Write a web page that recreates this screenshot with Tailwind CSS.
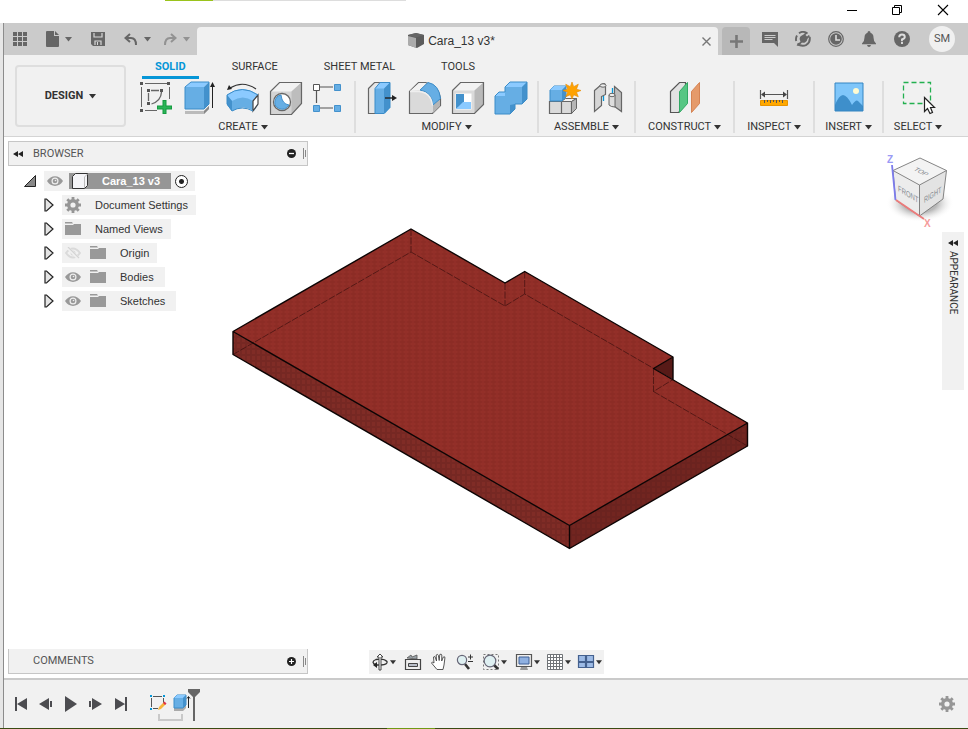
<!DOCTYPE html>
<html lang="en">
<head>
    <meta charset="UTF-8">
    <meta name="viewport" content="width=device-width, initial-scale=1.0">
    <title>Cara_13 v3*</title>
    <script src="https://cdn.jsdelivr.net/npm/@tailwindcss/browser@4"></script>
</head>
<body class="min-h-screen flex flex-col bg-white font-['Roboto',sans-serif] text-[11px] leading-4 text-[#333]">
    <!-- shared icons -->
    <svg class="hidden">
        <symbol id="caret" viewBox="0 0 7 5"><path d="M0 0h7L3.500 4.500z" fill="currentColor"/></symbol>
        <symbol id="folder" viewBox="0 0 16 14"><path d="M0 0h7l1 1.500H0zM0 3h8l1-1h7v11H0z" fill="#999"/></symbol>
        <symbol id="eye" viewBox="0 0 16 10">
            <path d="M0 5C4-1.500 12-1.500 16 5 12 11.500 4 11.500 0 5z" fill="#999"/>
            <circle cx="8" cy="5" r="3.500" fill="#eee"/><circle cx="8" cy="5" r="2.300" fill="#999"/><circle cx="8.500" cy="4.500" r=".8" fill="#eee"/>
        </symbol>
        <symbol id="gear" viewBox="0 0 16 16">
            <circle cx="8" cy="8" r="4.300" fill="none" stroke="#969696" stroke-width="3.400"/>
            <path d="M8 0v3M8 13v3M0 8h3M13 8h3M2.300 2.300l2 2M11.700 11.700l2 2M2.300 13.700l2-2M11.700 4.300l2-2" stroke="#969696" stroke-width="2.800"/>
        </symbol>
        <symbol id="expand" viewBox="0 0 10 14"><path d="M1 1h1.500L9 7l-6.500 6H1z" fill="#e4e4e4" stroke="#222" stroke-width="1.200"/></symbol>
        <symbol id="rewind" viewBox="0 0 10 6"><path d="M5 0v6L0 3zM10 0v6L5 3z" fill="#222"/></symbol>
    </svg>

    <!-- window title bar -->
    <header class="h-[23px] flex items-start">
        <div class="flex flex-1">
            <div class="w-[165px]"></div>
            <div class="w-12 h-px bg-[#9ac31c]"></div>
            <div class="w-[193px] h-px bg-[#ddd]"></div>
        </div>
        <div class="flex gap-[30px] pt-1 pr-[17px]">
            <button aria-label="Minimize" class="w-4 h-3"><svg class="w-4 h-3" viewBox="0 0 16 12"><path d="M4 6.500h10" stroke="#000"/></svg></button>
            <button aria-label="Restore" class="w-4 h-3"><svg class="w-4 h-3" viewBox="0 0 16 12"><path d="M3.500 3.500h7v7h-7zM5.500 3.500v-2h7v7h-2" fill="none" stroke="#000"/></svg></button>
            <button aria-label="Close" class="w-4 h-3"><svg class="w-4 h-3" viewBox="0 0 16 12"><path d="M3 1l10 10M13 1L3 11" stroke="#000" stroke-width="1.100"/></svg></button>
        </div>
    </header>

    <div class="flex-1 flex flex-col bg-[#e6e6e6] pl-[3px]">
    <div class="flex-1 flex flex-col border-l border-[#8c8c8c]">

        <!-- application bar -->
        <div class="h-8 flex items-end bg-[#cbcbcb] text-[#666]">
            <div class="w-[193px] h-8 flex items-center pl-[9px]">
                <button aria-label="Data panel"><svg class="w-[14px] h-[14px]" viewBox="0 0 14 14" fill="currentColor"><path d="M0 0h4v4H0zM5 0h4v4H5zM10 0h4v4h-4zM0 5h4v4H0zM5 5h4v4H5zM10 5h4v4h-4zM0 10h4v4H0zM5 10h4v4H5zM10 10h4v4h-4z"/></svg></button>
                <button aria-label="File" class="flex items-center gap-[6px] ml-[19px]">
                    <svg class="w-[13px] h-4" viewBox="0 0 13 16" fill="currentColor"><path d="M0 1q0-1 1-1h7v5h5v10q0 1-1 1H1q-1 0-1-1zM9 0l4 4H9z"/></svg>
                    <svg class="w-[7px] h-[5px]"><use href="#caret"/></svg>
                </button>
                <button aria-label="Save" class="ml-[19px]"><svg class="w-[14px] h-[14px]" viewBox="0 0 14 14"><path d="M0 0h14v14H2l-2-2z" fill="currentColor"/><path d="M3 1v4h8V1M4 13V9h6v4" fill="none" stroke="#d8d8d8" stroke-width="1.200"/><path d="M6 10h1v3H6z" fill="#d8d8d8"/></svg></button>
                <button aria-label="Undo" class="flex items-center gap-[6px] ml-[19px]">
                    <svg class="w-[14px] h-[13px]" viewBox="0 0 14 13"><path d="M6 1L1.500 5 6 9M2 5h5q5 0 5 7" fill="none" stroke="currentColor" stroke-width="2"/></svg>
                    <svg class="w-[7px] h-[5px]"><use href="#caret"/></svg>
                </button>
                <button aria-label="Redo" class="flex items-center gap-[6px] ml-[12px] text-[#929292]">
                    <svg class="w-[14px] h-[13px]" viewBox="0 0 14 13"><path d="M8 1l4.500 4L8 9M12 5H7q-5 0-5 7" fill="none" stroke="currentColor" stroke-width="2"/></svg>
                    <svg class="w-[7px] h-[5px]"><use href="#caret"/></svg>
                </button>
            </div>
            <div class="flex-1 h-7 flex items-center rounded-t bg-[#f1f1f1] pl-1 pr-[7px]">
                <div class="flex-1 flex items-center justify-center gap-1 font-['Liberation_Sans',sans-serif] text-[12px] text-[#333]">
                    <svg class="w-4 h-4" viewBox="0 0 16 16"><path d="M0 2l8-2 8 2v9l-7 4-9-3z" fill="#5c5c5c"/><path d="M0 3l8 2v10l-8-3z" fill="#ababab"/><path d="M0 2l8-2 8 2-8 2.500z" fill="#666"/></svg>
                    <span>Cara_13 v3*</span>
                </div>
                <button aria-label="Close document"><svg class="w-[9px] h-[9px]" viewBox="0 0 9 9"><path d="M.5.5l8 8M8.500.5l-8 8" stroke="#777" stroke-width="1.400"/></svg></button>
            </div>
            <button aria-label="New design" class="w-7 h-7 ml-1 flex items-center justify-center rounded-t bg-[#b8b8b8]">
                <svg class="w-[13px] h-[13px]" viewBox="0 0 13 13"><path d="M6.500 0v13M0 6.500h13" stroke="#777" stroke-width="2.600"/></svg>
            </button>
            <div class="h-8 flex items-center gap-[17px] pl-3 pr-[13px]">
                <button aria-label="Comments"><svg class="w-4 h-4" viewBox="0 0 16 16"><path d="M0 1h16v15l-4-4H0z" fill="currentColor"/><path d="M2.500 4.500h11M2.500 6.500h11M2.500 8.500h8" stroke="#ccc"/></svg></button>
                <button aria-label="Extensions"><svg class="w-4 h-4" viewBox="0 0 16 16"><path d="M4 2.200Q8-.6 12.500 2.500M14.700 6q.8 5-3.200 7.800-5 2.500-9-1.300M1.200 10Q.5 7 2 4.500" fill="none" stroke="currentColor" stroke-width="1.900"/><path d="M1.500 14.500l4-4Q3.500 7 6 5l2.500-1.500L11 1l1.200 1.200L10.500 4l1.500 1.500L13.800 4 15 5.200l-2.500 2.500q-.5 3-2.500 3.800-1.500.7-3 0l-3.500 3.500z" fill="currentColor"/></svg></button>
                <button aria-label="Job status"><svg class="w-4 h-4" viewBox="0 0 16 16"><circle cx="8" cy="8" r="7.300" fill="none" stroke="currentColor" stroke-width="1.200"/><circle cx="8" cy="8" r="5.800" fill="currentColor"/><path d="M8 4v5h4" fill="none" stroke="#ddd" stroke-width="1.600"/></svg></button>
                <button aria-label="Notifications"><svg class="w-4 h-4" viewBox="0 0 16 16" fill="currentColor"><path d="M8 0q1.500 0 1.500 1.800 3 1 3 4.700 0 4 2.500 6v.8H1v-.8q2.500-2 2.500-6 0-3.700 3-4.700Q6.500 0 8 0zM6 14h4q-.5 2-2 2t-2-2z"/></svg></button>
                <button aria-label="Help"><svg class="w-4 h-4" viewBox="0 0 16 16"><circle cx="8" cy="8" r="8" fill="currentColor"/><path d="M5.200 6.200Q5.200 3.500 8 3.500t2.800 2.500Q10.800 7.500 8 8.500v1.700M8 11v2" fill="none" stroke="#ddd" stroke-width="1.900"/></svg></button>
                <button class="w-[26px] h-[26px] ml-[2px] rounded-full bg-[#f0f0f0] text-[#555]">SM</button>
            </div>
        </div>

        <!-- ribbon -->
        <div class="flex bg-[#f1f1f1] border-b border-[#d4d4d4] h-[82px] pl-[11px]">
            <button class="w-[111px] h-[62px] mt-[10px] mr-[13px] flex items-center justify-center gap-[6px] rounded border-2 border-[#dedede] font-bold text-[#333]">DESIGN <svg class="w-[7px] h-[5px]"><use href="#caret"/></svg></button>
            <div class="flex-1 flex flex-col">
                <nav class="flex gap-5 pl-[3px] h-6">
                    <a href="#" class="px-[13px] pt-1 border-b-3 border-[#0696d7] font-bold text-[#0696d7]">SOLID</a>
                    <a href="#" class="px-[13px] pt-1">SURFACE</a>
                    <a href="#" class="px-[13px] pt-1">SHEET METAL</a>
                    <a href="#" class="px-[13px] pt-1">TOOLS</a>
                </nav>
                <div class="flex pt-[2px] h-[54px]">
                    <section class="pr-[7px] flex flex-col items-center gap-[2px]">
                        <div class="flex gap-[7px]">
                            <button aria-label="Create sketch"><svg class="w-9 h-9" viewBox="0 0 36 36" fill="none"><path d="M6 2.500h23M2.500 6v20M6 29.500h12M30.500 6v12" stroke="#666"/><path d="M9.500 12v8M12 9.500h8M22.500 11q-.5 9-10 12" stroke="#666" stroke-width="1.300"/><path d="M1 1h3v3H1zM28 1h3v3h-3zM1 28h3v3H1zM8 8h3v3H8zM21 8h3v3h-3zM8 21h3v3H8z" fill="#555"/><path d="M25.500 19v14M18 26.500h15" stroke="#149b40" stroke-width="4"/><path d="M25.500 20v12M19 26.500h13" stroke="#2bb457" stroke-width="2"/></svg></button>
                            <button aria-label="Extrude"><svg class="w-9 h-9" viewBox="0 0 36 36"><path d="M3 30h19l5-5v3l-5 5H3z" fill="#bbb"/><path d="M22 30l5-5v3l-5 5z" fill="#888"/><path d="M3 6h19v22H3z" fill="#66aee4"/><path d="M3 6l6-5h18l-5 5z" fill="#8bcaff"/><path d="M22 6l5-5v22l-5 5z" fill="#4391cc"/><path d="M3 6l6-5h18v22l-5 5H3z" fill="none" stroke="#3b8cc8"/><path d="M30.500 4v23" stroke="#222"/><path d="M28 6l2.500-5L33 6z" fill="#222"/></svg></button>
                            <button aria-label="Revolve"><svg class="w-9 h-9" viewBox="0 0 36 36"><path d="M5 7Q18-1 31 8" fill="none" stroke="#333" stroke-width="1.200"/><path d="M2 9l2-5 3 4z" fill="#222"/><path d="M2 14v10l5 6q11-7 22 0l4-6V14Q17 3 2 14z" fill="#66aee4"/><path d="M2 14l5 6q11-7 21 0l5-6Q17 2 2 14z" fill="#8bcaff"/><path d="M2 14v9l5 7V20z" fill="#4391cc"/><path d="M28 20l5-6v9l-5 7z" fill="#fff" stroke="#444" stroke-width="1.200"/><path d="M2 14Q17 3 33 14M7 30q10-6 21 0M2 14v9l5 7" fill="none" stroke="#3b8cc8"/></svg></button>
                            <button aria-label="Hole"><svg class="w-9 h-9" viewBox="0 0 36 36"><path d="M2.500 10.500l9-9h22v21l-10 11h-21z" fill="#d4d4d4"/><path d="M2.500 10.500l9-9h22l-10 9z" fill="#f2f2f2"/><path d="M23.500 10.500l10-9v21l-10 11z" fill="#bdbdbd"/><path d="M2.500 10.500l9-9h22v21l-10 11h-21z" fill="none" stroke="#666" stroke-width="1.200"/><circle cx="14" cy="21" r="8.500" fill="#fff" stroke="#666" stroke-width="1.300"/><path d="M13 14q1 9 8 10-4 6-10 3.500T7.500 18q2-4 5.500-4z" fill="#66aee4" stroke="#4391cc"/></svg></button>
                            <button aria-label="Pattern"><svg class="w-9 h-9" viewBox="0 0 36 36"><path d="M9 6h13M5.500 10v12M9 27h13" stroke="#555" fill="none" stroke-width="1.200"/><path d="M2.500 3.500h6v6h-6z" fill="#fff" stroke="#555"/><path d="M23.500 3.500h6v6h-6zM2.500 24.500h6v6h-6zM23.500 24.500h6v6h-6z" fill="#66aee4" stroke="#4391cc"/></svg></button>
                        </div>
                        <button class="flex items-center gap-[3px]">CREATE <svg class="w-[7px] h-[5px]"><use href="#caret"/></svg></button>
                    </section>
                    <section class="px-2 flex flex-col items-center gap-[2px] border-l-2 border-[#dedede]">
                        <div class="flex gap-[7px]">
                            <button aria-label="Press pull"><svg class="w-9 h-9" viewBox="0 0 36 36"><path d="M4.500 7.500l6-6h6v31h-12z" fill="#e6e6e6" stroke="#666" stroke-width="1.200"/><path d="M11 7.500l5-6h10v25l-5 6H11z" fill="#66aee4"/><path d="M11 7.500l5-6h10l-5 6z" fill="#8bcaff"/><path d="M20 7.500l6-6v25l-6 6z" fill="#4391cc"/><path d="M11 7.500l5-6h10v25l-6 6h-9z" fill="none" stroke="#3b8cc8"/><path d="M21 17h9" stroke="#222" stroke-width="1.400"/><path d="M28 14l5 3-5 3z" fill="#222"/></svg></button>
                            <button aria-label="Fillet"><svg class="w-9 h-9" viewBox="0 0 36 36"><path d="M2.500 10.500l9-9h7q13 3 15 16v7l-8 8h-23z" fill="#dadada" stroke="#666" stroke-width="1.200"/><path d="M3 10l9-8h7l-5 7z" fill="#f2f2f2"/><path d="M26 24l7-7v8l-7 7z" fill="#b5b5b5"/><path d="M13 9l8-7.500q11 2 12.500 16L26 24q-1-13-13-15z" fill="#66aee4" stroke="#3b8cc8"/><path d="M3 10.500h9q12 1 13.500 14" stroke="#eee" stroke-width="1.500" fill="none"/></svg></button>
                            <button aria-label="Shell"><svg class="w-9 h-9" viewBox="0 0 36 36"><path d="M2.500 9.500l8-8h23v22l-9 9h-22z" fill="#dadada"/><path d="M2.500 9.500l8-8h23l-9 8z" fill="#f2f2f2"/><path d="M24.500 9.500l9-8v22l-9 9z" fill="#b9b9b9"/><path d="M2.500 9.500l8-8h23v22l-9 9h-22z" fill="none" stroke="#666" stroke-width="1.200"/><path d="M5.500 12.500h16v16h-16z" fill="#fff"/><path d="M6 13h8v9l-8 6z" fill="#4391cc"/><path d="M6 28l7-7h8v7z" fill="#8bcaff"/></svg></button>
                            <button aria-label="Combine"><svg class="w-9 h-9" viewBox="0 0 36 36"><path d="M2 15l4-4h6V6l5-5h17v17l-5 5h-7v5l-5 5H2z" fill="#66aee4"/><path d="M12 6l5-5h17l-5 5zM2 15l4-4h6v4z" fill="#8bcaff"/><path d="M29 6l5-5v17l-5 5zM17 33v-9l5-1v5z" fill="#4391cc"/><path d="M2 15l4-4h6V6l5-5h17v17l-5 5h-7v5l-5 5H2z" fill="none" stroke="#3b8cc8"/></svg></button>
                        </div>
                        <button class="flex items-center gap-[3px]">MODIFY <svg class="w-[7px] h-[5px]"><use href="#caret"/></svg></button>
                    </section>
                    <section class="px-2 flex flex-col items-center gap-[2px] border-l-2 border-[#dedede]">
                        <div class="flex gap-[7px]">
                            <button aria-label="New component"><svg class="w-9 h-9" viewBox="0 0 36 36"><path d="M2.500 20.500h12v12h-12zM14.500 20.500h10v12h-10z" fill="#dadada" stroke="#666" stroke-width="1.200"/><path d="M14.500 20.500l4-3h11l-5 3z" fill="#f2f2f2" stroke="#666"/><path d="M24.500 20.500l5-3v10l-5 5z" fill="#b5b5b5" stroke="#666"/><path d="M3 9l4-4h12v11l-4 4H3z" fill="#66aee4" stroke="#3b8cc8"/><path d="M3 9l4-4h12l-4 4z" fill="#8bcaff"/><path d="M15 9l4-4v11l-4 4z" fill="#4391cc"/><path d="M25 1l1.700 4.700 4.600-2.500-1.800 5L34 9.500l-4.500 1.700 1.800 4.600-4.600-2L25 18l-1.700-4.200-4.600 2 2-4.600L16 9.500l4.700-1.300-2-5 4.600 2.500z" fill="#ffa200" stroke="#e48a00" stroke-width=".6"/></svg></button>
                            <button aria-label="Joint"><svg class="w-9 h-9" viewBox="0 0 36 36"><path d="M4.500 9.500l7-6q4-2 4 1v9l-4 2v9l-7 6z" fill="#d6d6d6" stroke="#666" stroke-width="1.200"/><ellipse cx="13" cy="4.500" rx="3" ry="1.700" fill="#eee" stroke="#666"/><path d="M24.500 5.500l7 6v19l-7-5z" fill="#bdbdbd" stroke="#666" stroke-width="1.200"/><path d="M19 14v10q2 2 6 2V14z" fill="#ddd" stroke="#666"/><ellipse cx="22" cy="14" rx="3" ry="1.700" fill="#eee" stroke="#666"/><path d="M13.500 15v5M22.500 7v5" stroke="#0696d7" stroke-width="1.300"/></svg></button>
                        </div>
                        <button class="flex items-center gap-[3px]">ASSEMBLE <svg class="w-[7px] h-[5px]"><use href="#caret"/></svg></button>
                    </section>
                    <section class="px-3 flex flex-col items-center gap-[2px] border-l-2 border-[#dedede]">
                        <button aria-label="Offset plane"><svg class="w-9 h-9" viewBox="0 0 36 36"><path d="M3.500 10.500l9-9h6v21l-7 9h-8z" fill="#e2e2e2" stroke="#555" stroke-width="1.200"/><path d="M12.500 10.500l8-9v21l-8 9z" fill="#56c683" stroke="#31a863"/><path d="M24.500 10.500l8-9v21l-8 9z" fill="#e59a6a" stroke="#d58353"/></svg></button>
                        <button class="flex items-center gap-[3px]">CONSTRUCT <svg class="w-[7px] h-[5px]"><use href="#caret"/></svg></button>
                    </section>
                    <section class="px-3 flex flex-col items-center gap-[2px] border-l-2 border-[#dedede]">
                        <button aria-label="Measure"><svg class="w-9 h-9" viewBox="0 0 36 36"><path d="M4.500 9v9M31.500 9v9M6 13.500h24" stroke="#555" stroke-width="1.200"/><path d="M5 13.500l4-3v6zM31 13.500l-4-3v6z" fill="#444"/><path d="M4.500 19.500h27v5h-27z" fill="#ffa800" stroke="#e89400"/><path d="M8.500 19v3M11.500 19v2M14.500 19v3M17.500 19v2M20.500 19v3M23.500 19v2M26.500 19v3" stroke="#555"/></svg></button>
                        <button class="flex items-center gap-[3px]">INSPECT <svg class="w-[7px] h-[5px]"><use href="#caret"/></svg></button>
                    </section>
                    <section class="px-[10px] flex flex-col items-center gap-[2px] border-l-2 border-[#dedede]">
                        <button aria-label="Insert image"><svg class="w-9 h-9" viewBox="0 0 36 36"><path d="M4 2h28v28H4z" fill="#7fc6fa"/><path d="M4 24q4-10 8-10t9 10q4-6 6-4l5 5v5H4z" fill="#3e8fcb"/><circle cx="25" cy="10" r="3" fill="#fffbd2"/><path d="M4 2h28v28H4z" fill="none" stroke="#3585c2"/></svg></button>
                        <button class="flex items-center gap-[3px]">INSERT <svg class="w-[7px] h-[5px]"><use href="#caret"/></svg></button>
                    </section>
                    <section class="px-[10px] flex flex-col items-center gap-[2px] border-l-2 border-[#dedede]">
                        <button aria-label="Window select"><svg class="w-9 h-9" viewBox="0 0 36 36"><path d="M3.500 1.500h27v21h-27z" fill="none" stroke="#22b04f" stroke-width="1.300" stroke-dasharray="5 3"/><path d="M24.500 16.500v14l3-3 2.500 5 2.500-1-2-5h4z" fill="#fff" stroke="#222" stroke-width="1.200"/></svg></button>
                        <button class="flex items-center gap-[3px]">SELECT <svg class="w-[7px] h-[5px]"><use href="#caret"/></svg></button>
                    </section>
                </div>
            </div>
        </div>

        <!-- canvas -->
        <main class="relative flex-1 flex flex-col bg-white">
            <svg class="absolute inset-0 w-full h-full" viewBox="4 137 964 541">
                <defs>
                    <pattern id="weave" width="7" height="4" patternUnits="userSpaceOnUse"><path d="M3.500 0L7 2 3.500 4 0 2z" fill="#7e241f" opacity=".35"/></pattern>
                    <pattern id="ribs" width="5" height="6" patternUnits="userSpaceOnUse"><path d="M0 0h2v6H0zM2 0h3v2H2z" fill="#501a17" opacity=".2"/></pattern>
                </defs>
                <path d="M411 229L233 331.500l336.500 194 178-102.500-94-54.500 19.500-11.500-148.300-85.500-19.700 11.500z" fill="#932f28"/>
                <path d="M411 229L233 331.500l336.500 194 178-102.500-94-54.500 19.500-11.500-148.300-85.500-19.700 11.500z" fill="url(#weave)"/>
                <path d="M233 331.500l336.500 194v23L233 354.500z" fill="#802c26"/>
                <path d="M233 331.500l336.500 194v23L233 354.500z" fill="url(#ribs)"/>
                <path d="M569.500 525.500l178-102.500v23l-178 102.500z" fill="#722520"/>
                <path d="M569.500 525.500l178-102.500v23l-178 102.500z" fill="url(#ribs)"/>
                <path d="M653.500 368.500L673 357v22.500z" fill="#571a17"/>
                <path d="M233 354.500L411 252l94 54 19.700-12 129 74.500M411 229v23M505 283v23M524.700 271.500V294M653.500 368.500v23l19.500-12M653.500 391.500L747.500 446" fill="none" stroke="#3c100e" stroke-width=".7" stroke-dasharray="7 1.500"/>
                <path d="M411 229L233 331.500v23l336.500 194 178-102.500v-23l-94-54.500L673 357l-148.300-85.500L505 283zM233 331.500l336.500 194 178-102.500M569.500 525.500v23M673 357v22.500" fill="none" stroke="#0c0404" stroke-width="1.400" stroke-linejoin="round"/>
            </svg>

            <div class="relative flex-1 flex justify-between pt-1 pl-1 pr-1">
                <aside class="w-[300px]">
                    <div class="h-[25px] flex items-center border border-[#c6c6c6] bg-[#f1f1f1] pl-1 pr-px text-[#555]">
                        <svg class="w-[10px] h-[6px]"><use href="#rewind"/></svg>
                        <h2 class="flex-1 pl-[10px]">BROWSER</h2>
                        <button aria-label="Collapse browser"><svg class="w-[9px] h-[9px]" viewBox="0 0 9 9"><circle cx="4.500" cy="4.500" r="4.500" fill="#222"/><path d="M2 4.500h5" stroke="#fff" stroke-width="1.300"/></svg></button>
                        <svg class="w-[3px] h-[11px] ml-[7px]" viewBox="0 0 3 11"><path d="M.5 0v11M2.500 2v7" stroke="#888"/></svg>
                    </div>
                    <ul class="flex flex-col gap-1 pt-[5px] font-['Liberation_Sans',sans-serif] text-[#333]">
                        <li class="flex items-center pl-4">
                            <svg class="w-3 h-3 mr-2" viewBox="0 0 12 12"><path d="M11.500.5v11H.5z" fill="#888" stroke="#222"/></svg>
                            <div class="h-5 flex items-center bg-[#f1f1f1] pl-[3px] pr-[7px]">
                                <button aria-label="Toggle component" class="w-[22px]"><svg class="w-4 h-[10px]"><use href="#eye"/></svg></button>
                                <div class="h-4 flex items-center bg-[#969696] px-[3px]">
                                    <svg class="w-4 h-4" viewBox="0 0 16 16"><path d="M.5 3.500l3-3h12v12l-3 3H.5z" fill="#f4f4f7" stroke="#333"/><path d="M12.500 4v11M12.500 4l3-3" stroke="#bbb"/></svg>
                                    <b class="pl-[14px] pr-2 text-white">Cara_13 v3</b>
                                </div>
                                <input type="radio" checked aria-label="Activate component" class="appearance-none w-[13px] h-[13px] ml-1 rounded-full border border-[#222] bg-[radial-gradient(#222_2px,white_3px)]">
                            </div>
                        </li>
                        <li class="flex items-center pl-9">
                            <button aria-label="Expand"><svg class="w-[10px] h-[14px]"><use href="#expand"/></svg></button>
                            <div class="h-5 ml-2 flex items-center bg-[#f1f1f1] pl-[3px] pr-2"><svg class="w-4 h-4 mr-[14px]"><use href="#gear"/></svg>Document Settings</div>
                        </li>
                        <li class="flex items-center pl-9">
                            <button aria-label="Expand"><svg class="w-[10px] h-[14px]"><use href="#expand"/></svg></button>
                            <div class="h-5 ml-2 flex items-center bg-[#f1f1f1] pl-[3px] pr-2"><svg class="w-4 h-[14px] mr-[14px]"><use href="#folder"/></svg>Named Views</div>
                        </li>
                        <li class="flex items-center pl-9">
                            <button aria-label="Expand"><svg class="w-[10px] h-[14px]"><use href="#expand"/></svg></button>
                            <div class="h-5 ml-2 flex items-center bg-[#f1f1f1] pl-[3px] pr-2"><button aria-label="Show" class="mr-[9px]"><svg class="w-4 h-3" viewBox="0 0 16 12"><path d="M1 6q7-9 14 0-7 9-14 0z" fill="none" stroke="#dadada" stroke-width="2"/><circle cx="8" cy="6" r="2.500" fill="#dadada"/><path d="M2 0l12 12" stroke="#f1f1f1" stroke-width="3"/><path d="M3 0l11 11" stroke="#d4d4d4" stroke-width="1.200"/></svg></button><svg class="w-4 h-[14px] mr-[14px]"><use href="#folder"/></svg>Origin</div>
                        </li>
                        <li class="flex items-center pl-9">
                            <button aria-label="Expand"><svg class="w-[10px] h-[14px]"><use href="#expand"/></svg></button>
                            <div class="h-5 ml-2 flex items-center bg-[#f1f1f1] pl-[3px] pr-[11px]"><button aria-label="Hide" class="mr-[9px]"><svg class="w-4 h-[10px]"><use href="#eye"/></svg></button><svg class="w-4 h-[14px] mr-[14px]"><use href="#folder"/></svg>Bodies</div>
                        </li>
                        <li class="flex items-center pl-9">
                            <button aria-label="Expand"><svg class="w-[10px] h-[14px]"><use href="#expand"/></svg></button>
                            <div class="h-5 ml-2 flex items-center bg-[#f1f1f1] pl-[3px] pr-[11px]"><button aria-label="Hide" class="mr-[9px]"><svg class="w-4 h-[10px]"><use href="#eye"/></svg></button><svg class="w-4 h-[14px] mr-[14px]"><use href="#folder"/></svg>Sketches</div>
                        </li>
                    </ul>
                </aside>

                <div class="flex flex-col items-end">
                    <!-- view cube -->
                    <svg class="w-[84px] h-[91px]" viewBox="880 141 84 91" font-family="Liberation Sans, sans-serif">
                        <defs><radialGradient id="shade"><stop offset=".5" stop-color="#888" stop-opacity=".6"/><stop offset="1" stop-color="#fff" stop-opacity="0"/></radialGradient></defs>
                        <ellipse cx="920" cy="203" rx="34" ry="19" fill="url(#shade)"/>
                        <path d="M920 158l26.500 12.500-27 14.500-26.500-14.500z" fill="#f3f3f3"/>
                        <path d="M893 170.500l26.500 14.500v31l-24-16z" fill="#ececec"/>
                        <path d="M946.500 170.500l-27 14.500v31L943 199z" fill="#e3e3e3"/>
                        <path d="M920 158l26.500 12.500-27 14.500-26.500-14.500zM919.500 185v31M893 170.500l2.500 29.500 24 16 23.500-17 3.500-28.500" fill="none" stroke="#777" stroke-width=".9"/>
                        <path d="M892 165l3.500 35" stroke="#7b7bec" stroke-width="1.800"/>
                        <path d="M896 200l28 19" stroke="#ec7b7b" stroke-width="1.800"/>
                        <text x="887" y="163" font-size="10" font-weight="bold" fill="#9a9af5">Z</text>
                        <text x="924" y="227" font-size="10" font-weight="bold" fill="#f59a9a">X</text>
                        <text transform="matrix(.85 .5 0 1.200 898 191)" font-size="7" fill="#858a90">FRONT</text>
                        <text transform="matrix(.8 -.5 0 1.200 924 203)" font-size="7" fill="#858a90">RIGHT</text>
                        <text transform="matrix(.7 .35 -.6 .45 913 170)" font-size="9" fill="#858a90">TOP</text>
                    </svg>
                    <button class="w-[22px] h-[158px] flex flex-col items-center bg-[#f1f1f1] pt-2 gap-[5px] text-[10px]">
                        <svg class="w-[10px] h-[6px]"><use href="#rewind"/></svg>
                        <span class="[writing-mode:vertical-rl]">APPEARANCE</span>
                    </button>
                </div>
            </div>

            <div class="relative grid grid-cols-[1fr_auto_1fr] items-end px-1 pb-1">
                <div class="w-[300px] h-[25px] flex items-center border border-t-0 border-[#c6c6c6] bg-[#f1f1f1] pl-6 pr-px text-[#555]">
                    <h2 class="flex-1">COMMENTS</h2>
                    <button aria-label="Add comment"><svg class="w-[9px] h-[9px]" viewBox="0 0 9 9"><circle cx="4.500" cy="4.500" r="4.500" fill="#222"/><path d="M2 4.500h5M4.500 2v5" stroke="#fff" stroke-width="1.200"/></svg></button>
                    <svg class="w-[3px] h-[11px] ml-[7px]" viewBox="0 0 3 11"><path d="M.5 0v11M2.500 2v7" stroke="#888"/></svg>
                </div>
                <div class="h-6 flex items-center gap-2 bg-[#f1f1f1] px-[2px]">
                    <button aria-label="Orbit" class="flex items-center gap-px"><svg class="w-[18px] h-[18px]" viewBox="0 0 18 18" fill="none"><path d="M5 12Q-1 9 5 6.500q8-1.500 11 2 1 3-6 3.500H5" stroke="#333" stroke-width="1.300"/><path d="M8 17V4H6l3-3 3 3h-2v13z" fill="#fff" stroke="#444"/><path d="M2 12l4-3v6z" fill="#222"/></svg><svg class="w-[6px] h-[5px]"><use href="#caret"/></svg></button>
                    <button aria-label="Look at"><svg class="w-[18px] h-[18px]" viewBox="0 0 18 18"><path d="M3 5l4-3 1 2 5-2v4z" fill="#9aa2a8" stroke="#555" stroke-width=".8"/><path d="M1.500 6.500h15v10h-15z" fill="#eee" stroke="#444" stroke-width="1.200"/><path d="M4.500 10.500h9v3h-9z" fill="#b9bec8" stroke="#444"/></svg></button>
                    <button aria-label="Pan"><svg class="w-[18px] h-[18px]" viewBox="0 0 18 18"><path d="M7 16.500L1.500 10q.5-2 2.500 0L3.500 4q1.500-1.500 2 1l1 3-.3-6q1.500-1.500 2.200.5l.8 5 .6-6q1.600-1 2 .5l-.1 6 1.600-4q2-.8 1.600 1L14 12l-1 4.500z" fill="#fff" stroke="#444" stroke-width=".9"/></svg></button>
                    <button aria-label="Zoom"><svg class="w-[18px] h-[18px]" viewBox="0 0 18 18"><path d="M9 11l4 5" stroke="#333" stroke-width="2.600"/><circle cx="6" cy="7" r="4.600" fill="#dff0f2" stroke="#667" stroke-width="1.200"/><path d="M12 4h5M14.500 1.500v5M12 8.500h5" stroke="#333"/></svg></button>
                    <button aria-label="Fit" class="flex items-center gap-px"><svg class="w-[18px] h-[18px]" viewBox="0 0 18 18"><path d="M1.500 1.500h15v15h-15z" fill="none" stroke="#777" stroke-dasharray="2 2"/><path d="M11 11l5 5" stroke="#333" stroke-width="2.600"/><circle cx="8" cy="8" r="5.800" fill="#dff0f2" stroke="#667" stroke-width="1.200"/></svg><svg class="w-[6px] h-[5px]"><use href="#caret"/></svg></button>
                    <div class="flex gap-[6px]">
                        <button aria-label="Display settings" class="flex items-center gap-px"><svg class="w-[18px] h-[18px]" viewBox="0 0 18 18"><path d="M1.500 1.500h15v12h-15z" fill="#eee" stroke="#555" stroke-width="1.200"/><path d="M4 4h10v7H4z" fill="#8fb0e0" stroke="#3d5f96"/><path d="M6 14h6l1 3H5z" fill="#999"/></svg><svg class="w-[6px] h-[5px]"><use href="#caret"/></svg></button>
                        <button aria-label="Grid and snaps" class="flex items-center gap-px"><svg class="w-[18px] h-[18px]" viewBox="0 0 18 18"><path d="M1.500 1.500h15v15h-15zM4.500 1v16M7.500 1v16M10.500 1v16M13.500 1v16M1 4.500h16M1 7.500h16M1 10.500h16M1 13.500h16" fill="#fff" stroke="#707478"/></svg><svg class="w-[6px] h-[5px]"><use href="#caret"/></svg></button>
                        <button aria-label="Viewports" class="flex items-center gap-px"><svg class="w-[18px] h-[18px]" viewBox="0 0 18 18"><path d="M1.500 2.500h7v6h-7zM9.500 2.500h7v6h-7zM1.500 9.500h7v5h-7zM9.500 9.500h7v5h-7z" fill="#9dbbe6" stroke="#44618f" stroke-width="1.200"/></svg><svg class="w-[6px] h-[5px]"><use href="#caret"/></svg></button>
                    </div>
                </div>
            </div>
        </main>

        <!-- timeline -->
        <footer class="h-[50px] flex items-center bg-[#f1f1f1] border-t-2 border-[#cacaca] pl-[10px] pr-[13px]">
            <div class="flex gap-[11px]">
                <button aria-label="Go to start"><svg class="w-[14px] h-4" viewBox="0 0 14 16" fill="#4c4c50"><path d="M1 1h2v14H1zM13 2v12L3 8z"/></svg></button>
                <button aria-label="Step back"><svg class="w-[14px] h-4" viewBox="0 0 14 16" fill="#4c4c50"><path d="M10 2v12L0 8zM11 5h2v6h-2z"/></svg></button>
                <button aria-label="Play"><svg class="w-[14px] h-4" viewBox="0 0 14 16" fill="#4c4c50"><path d="M1 0l12 8-12 8z"/></svg></button>
                <button aria-label="Step forward"><svg class="w-[14px] h-4" viewBox="0 0 14 16" fill="#4c4c50"><path d="M3 2v12l10-6zM0 5h2v6H0z"/></svg></button>
                <button aria-label="Go to end"><svg class="w-[14px] h-4" viewBox="0 0 14 16" fill="#4c4c50"><path d="M1 2v12l10-6zM11 1h2v14h-2z"/></svg></button>
            </div>
            <div class="flex-1 pl-5">
                <svg class="w-[54px] h-9" viewBox="148 686 54 36">
                    <path d="M153 696.500h9M151.500 698v9M153 708.500h5M163.500 698v5" stroke="#555"/>
                    <path d="M150 695h2v2h-2zM163 695h2v2h-2zM150 708h2v2h-2z" fill="#0696d7"/>
                    <path d="M158 710l1-3 5-5 2 2-5 5z" fill="#f6b53c"/><path d="M163 703l1.500-1.500 2 2-1.500 1.500z" fill="#e0324a"/>
                    <path d="M174 708h9l3-3v3l-3 3h-9z" fill="#aaa"/>
                    <path d="M174 698l3-3h9v10l-3 3h-9z" fill="#66aee4" stroke="#3b8cc8"/><path d="M174 698l3-3h9l-3 3z" fill="#8bcaff"/><path d="M183 698l3-3v10l-3 3z" fill="#4391cc"/>
                    <path d="M188.500 697v11M187 698.500l1.500-2 1.500 2" stroke="#222" fill="none"/>
                    <path d="M159 714v6h23v-6" fill="none" stroke="#c9c9c9" stroke-width="2"/>
                    <path d="M188 689h12v3l-5 5v24h-2v-24l-5-5z" fill="#666"/>
                </svg>
            </div>
            <button aria-label="Timeline settings"><svg class="w-4 h-4"><use href="#gear"/></svg></button>
        </footer>
    </div>
    </div>
    <div class="flex h-px bg-[#3a4b12]"><div class="w-[387px]"></div><div class="w-12 bg-[#6f9a14]"></div></div>
</body>
</html>
